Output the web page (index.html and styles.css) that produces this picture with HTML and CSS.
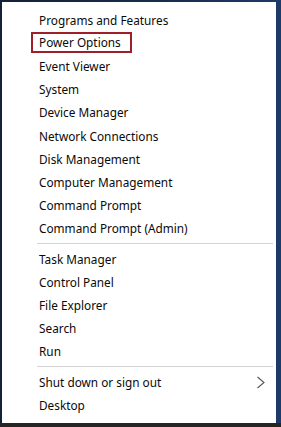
FILE: index.html
```html
<!DOCTYPE html>
<html>
<head>
<meta charset="utf-8">
<link rel="stylesheet" href="styles.css">
</head>
<body>
<div class="screen">
  <div class="menu">
    <div class="item"><span class="label">Programs and Features</span></div>
    <div class="item"><span class="label highlight">Power Options</span></div>
    <div class="item"><span class="label">Event Viewer</span></div>
    <div class="item"><span class="label">System</span></div>
    <div class="item"><span class="label">Device Manager</span></div>
    <div class="item"><span class="label">Network Connections</span></div>
    <div class="item"><span class="label">Disk Management</span></div>
    <div class="item"><span class="label">Computer Management</span></div>
    <div class="item"><span class="label">Command Prompt</span></div>
    <div class="item"><span class="label">Command Prompt (Admin)</span></div>
    <div class="sep"></div>
    <div class="item"><span class="label">Task Manager</span></div>
    <div class="item"><span class="label">Control Panel</span></div>
    <div class="item"><span class="label">File Explorer</span></div>
    <div class="item"><span class="label">Search</span></div>
    <div class="item"><span class="label">Run</span></div>
    <div class="sep"></div>
    <div class="item submenu"><span class="label">Shut down or sign out</span>
      <svg class="chev" width="10" height="13" viewBox="0 0 10 13"><path d="M1.5 1 L8 6.5 L1.5 12" fill="none" stroke="#555" stroke-width="1.1"/></svg>
    </div>
    <div class="item"><span class="label">Desktop</span></div>
  </div>
</div>
</body>
</html>
```

FILE: styles.css
```css
html, body {
  margin: 0;
  padding: 0;
}
body {
  width: 281px;
  height: 427px;
  background: linear-gradient(90deg, #142038 0%, #1a2c4e 60%, #1d3a6a 100%);
  font-family: "Noto Sans", "Open Sans", sans-serif;
  font-size: 11.8px;
  color: #0a0a0a;
  overflow: hidden;
}
.screen {
  height: 427px;
  box-sizing: border-box;
  padding: 2px 5px 4px 2px;
  background: linear-gradient(180deg, transparent 0, transparent 423px, #252525 423px);
}
.menu {
  background: #fff;
  height: 421px;
  box-sizing: border-box;
  padding-top: 7px;
  display: flex;
  flex-direction: column;
}
.item {
  height: 23.1px;
  flex-shrink: 0;
  display: flex;
  align-items: center;
  padding-left: 37px;
  padding-right: 10px;
}
.label {
  line-height: 17px;
  white-space: nowrap;
}
.highlight {
  display: inline-block;
  border: 2px solid #9e1f27;
  padding: 0 9px 0 6px;
  margin-left: -8px;
  margin-top: -2px;
}
.sep {
  height: 7.6px;
  flex-shrink: 0;
  display: flex;
  align-items: center;
  padding-left: 35px;
  padding-right: 3px;
}
.sep::after {
  content: "";
  flex: 1;
  height: 1px;
  background: #d4d4d4;
}
.submenu {
  justify-content: space-between;
}
.chev {
  margin-top: 1px;
}
```
